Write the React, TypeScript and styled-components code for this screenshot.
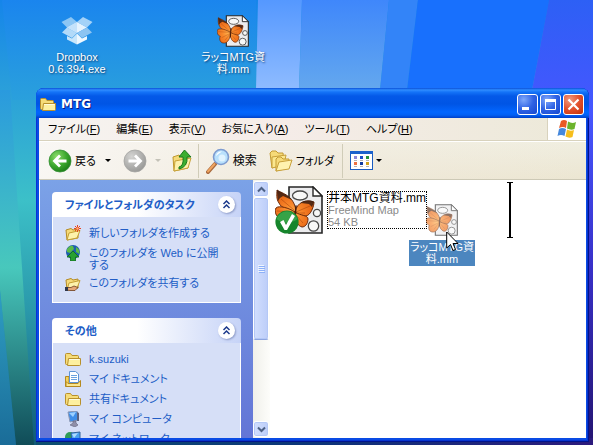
import React from "react";
import styled, { createGlobalStyle, css } from "styled-components";

const GlobalStyle = createGlobalStyle`
  *, *::before, *::after { box-sizing: border-box; }
  body {
    margin: 0;
    font-family: "Liberation Sans", "Noto Sans CJK JP", sans-serif;
    font-size: 11px;
    line-height: 12px;
    font-feature-settings: "palt";
  }
  button { font: inherit; color: inherit; padding: 0; border: 0; background: none; font-feature-settings: inherit; }
  svg { display: block; flex: none; }
`;

const Desktop = styled.main`
  position: relative;
  isolation: isolate;
  height: 100vh;
  display: flex;
  flex-direction: column;
  overflow: hidden;
`;

const WallpaperSvg = styled.svg`
  position: absolute;
  inset: 0;
  width: 100%;
  height: 100%;
  z-index: -1;
`;

const Shortcuts = styled.div`
  display: flex;
  gap: 80px;
  height: 88px;
  padding: 15px 0 0 39px;
`;

const Shortcut = styled.button`
  width: 76px;
  display: flex;
  flex-direction: column;
  align-items: center;
  gap: 4px;
  color: #fff;
  text-shadow: 1px 1px 2px #0a3a70;
`;

const Window = styled.section`
  flex: 1;
  min-height: 0;
  margin: 0 4px 3px 36px;
  padding: 0 3px 4px;
  display: flex;
  flex-direction: column;
  border-radius: 8px 8px 0 0;
  background: #0a4be4;
  box-shadow: inset -1px -1px 0 #00138c, inset 1px 0 0 #0831d9, inset -2px -2px 0 #0734d0;
  overflow: hidden;
`;

const TitleBar = styled.header`
  height: 30px;
  flex: none;
  margin: 0 -3px;
  padding: 2px 5px 0 4px;
  display: flex;
  align-items: center;
  gap: 5px;
  background: linear-gradient(#0a50d8 0, #2f8dff 2px, #1474f8 4px, #0459e8 8px, #0055e5 16px, #0266ff 24px, #0260f4 27px, #0140c8 30px);
`;

const Title = styled.h1`
  flex: 1;
  margin: 0;
  color: #fff;
  font: bold 12px/14px "DejaVu Sans", sans-serif;
  text-shadow: 1px 1px 0 #0a1883;
`;

const Captions = styled.div`
  display: flex;
  gap: 2px;
`;

const CaptionButton = styled.button<{ $close?: boolean }>`
  width: 21px;
  height: 21px;
  border: 1px solid #fff;
  border-radius: 3px;
  display: grid;
  place-items: center;
  background: ${(p) =>
    p.$close
      ? "radial-gradient(circle at 30% 25%, #f09a80, #e2502c 50%, #c03008)"
      : "radial-gradient(circle at 30% 25%, #7fa8fb, #2f62e4 50%, #1547cf)"};
`;

const MenuRow = styled.nav`
  flex: none;
  height: 23px;
  display: flex;
  align-items: stretch;
  background: linear-gradient(90deg, #f6f3f0, #f5ece8 45%, #ece9d8);
  border-bottom: 1px solid #d8d2bd;
`;

const Menus = styled.div`
  flex: 1;
  display: flex;
  align-items: center;
  gap: 16px;
  padding-left: 9px;
`;

const MenuButton = styled.button`
  white-space: nowrap;
  color: #000;
`;

const FlagBox = styled.div`
  width: 39px;
  display: grid;
  place-items: center;
  background: #fff;
  border-left: 1px solid #d8d2bd;
`;

const ToolBar = styled.div`
  flex: none;
  height: 39px;
  display: flex;
  align-items: center;
  padding-left: 9px;
  border-top: 1px solid #fff;
  border-bottom: 1px solid #cdc9b6;
  background: linear-gradient(90deg, rgba(250, 248, 246, 0.9), rgba(245, 238, 230, 0.5) 45%, rgba(236, 231, 212, 0)),
    linear-gradient(#f0eee0, #ece6d2);
`;

const ToolButton = styled.button<{ $space: number }>`
  display: flex;
  align-items: center;
  gap: 3px;
  margin-right: ${(p) => p.$space}px;
  white-space: nowrap;
`;

const ToolText = styled.span<{ $wide?: boolean }>`
  font-size: ${(p) => (p.$wide ? 12 : 11)}px;
`;

const Separator = styled.div`
  align-self: stretch;
  width: 1px;
  margin: 2px 7px 1px 0;
  background: #d0ccb8;
`;

const Caret = styled.span<{ $dim?: boolean }>`
  border: 3px solid transparent;
  border-bottom-width: 0;
  border-top-color: ${(p) => (p.$dim ? "#c4c2b8" : "#000")};
`;

const Content = styled.div`
  flex: 1;
  min-height: 0;
  display: flex;
  background: #fff;
  padding-left: 1px;
`;

const Sidebar = styled.aside`
  width: 213px;
  flex: none;
  overflow: hidden;
  padding: 12px 12px 0;
  background: linear-gradient(#7ba2e7, #6375d6);
`;

const Panel = styled.section`
  margin-bottom: 15px;
`;

const PanelHead = styled.div`
  height: 25px;
  display: flex;
  align-items: center;
  justify-content: space-between;
  padding: 0 6px 0 13px;
  border-radius: 4px 4px 0 0;
  background: linear-gradient(90deg, #fff 45%, #c6d3f7);
`;

const PanelTitle = styled.h2`
  margin: 0;
  font-size: 11px;
  line-height: 14px;
  font-weight: bold;
  color: #215dc6;
`;

const CollapseButton = styled.button`
  width: 17px;
  height: 17px;
  border-radius: 50%;
  background: #fff;
  box-shadow: 1px 1px 2px #8e9cc8;
  display: grid;
  place-items: center;
`;

const LinkList = styled.ul`
  list-style: none;
  margin: 0;
  padding: 8px 12px 11px;
  display: flex;
  flex-direction: column;
  gap: 4px;
  background: #d6dff7;
  border: 1px solid #fff;
  border-top: 0;
`;

const TaskLink = styled.a`
  display: flex;
  gap: 8px;
  color: #215dc6;
  text-decoration: none;
  white-space: nowrap;
`;

const TaskText = styled.span`
  padding-top: 2px;
`;

const ScrollBar = styled.div`
  width: 17px;
  flex: none;
  display: flex;
  flex-direction: column;
  padding: 1px 1px 1px 0;
  background: linear-gradient(90deg, #f0f0ea, #fdfdfa);
`;

const scrollPart = css`
  border: 1px solid #fff;
  border-radius: 3px;
  background: linear-gradient(90deg, #d2dffe, #bccdf8);
  box-shadow: inset 0 0 0 1px #b4c8f6;
  display: grid;
  place-items: center;
`;

const ScrollButton = styled.button`
  ${scrollPart}
  height: 16px;
  flex: none;
`;

const ScrollTrack = styled.div`
  flex: 1;
  min-height: 0;
`;

const ScrollThumb = styled.div`
  ${scrollPart}
  height: 64%;
  border-bottom-color: #8ea6e0;
`;

const Files = styled.div`
  position: relative;
  flex: 1;
  padding: 6px 5px;
`;

const FileItem = styled.button`
  display: flex;
  align-items: center;
  gap: 4px;
  text-align: left;
`;

const FileLabel = styled.span`
  border: 1px dotted #000;
  white-space: nowrap;
  display: flex;
  flex-direction: column;
  color: #8a8a8a;
`;

const FileName = styled.span`
  color: #000;
  font-size: 12px;
`;

const DragGhost = styled.div`
  position: absolute;
  left: 139px;
  top: 24px;
  width: 66px;
  display: flex;
  flex-direction: column;
  align-items: center;
  gap: 4px;
`;

const GhostIcon = styled.div`
  opacity: 0.65;
`;

const GhostLabel = styled.span`
  align-self: stretch;
  padding: 1px 0;
  text-align: center;
  white-space: nowrap;
  color: #fff;
  background: #4c86bf;
`;

const Pointer = styled.svg`
  position: absolute;
  left: 37px;
  top: 27px;
`;

const InsertMark = styled.svg`
  position: absolute;
  left: 237px;
  top: 2px;
`;

function Wallpaper() {
  return (
    <WallpaperSvg viewBox="0 0 593 445" preserveAspectRatio="none" aria-hidden="true">
      <defs>
        <linearGradient id="wpBase" x1="0" y1="0" x2="0" y2="1">
          <stop offset="0" stopColor="#1585ea" />
          <stop offset="0.2" stopColor="#2a9fda" />
          <stop offset="0.45" stopColor="#3cc0c8" />
          <stop offset="0.7" stopColor="#2a98aa" />
          <stop offset="1" stopColor="#115a78" />
        </linearGradient>
        <linearGradient id="wpSky" x1="0" y1="0" x2="0" y2="1">
          <stop offset="0" stopColor="#1a85ee" />
          <stop offset="1" stopColor="#2aa0dc" />
        </linearGradient>
        <linearGradient id="wpBand" x1="0" y1="0" x2="0" y2="1">
          <stop offset="0" stopColor="#5598ff" />
          <stop offset="1" stopColor="#8fbcff" />
        </linearGradient>
        <linearGradient id="wpMid" x1="0" y1="0" x2="0" y2="1">
          <stop offset="0" stopColor="#3f87fb" />
          <stop offset="1" stopColor="#64a8ee" />
        </linearGradient>
        <linearGradient id="wpEdge" x1="0" y1="0" x2="0" y2="1">
          <stop offset="0" stopColor="#2d60f5" />
          <stop offset="0.25" stopColor="#4656ff" />
          <stop offset="0.6" stopColor="#3830c8" />
          <stop offset="1" stopColor="#241470" />
        </linearGradient>
        <linearGradient id="wpStreak" x1="0" y1="0" x2="0" y2="1">
          <stop offset="0" stopColor="#2a9ade" />
          <stop offset="0.5" stopColor="#48c8bc" />
          <stop offset="1" stopColor="#104c58" />
        </linearGradient>
        <linearGradient id="wpCorner" x1="0" y1="0" x2="0" y2="1">
          <stop offset="0" stopColor="#2f9fc4" />
          <stop offset="1" stopColor="#1a6c98" />
        </linearGradient>
        <linearGradient id="wpFoot">
          <stop offset="0" stopColor="#0d5070" />
          <stop offset="0.5" stopColor="#0c3478" />
          <stop offset="1" stopColor="#2c1a7c" />
        </linearGradient>
      </defs>
      <rect width="593" height="445" fill="url(#wpBase)" />
      <path d="M2 0H256V100H12Z" fill="url(#wpSky)" />
      <path d="M0 90H10L34 445H16L0 290Z" fill="url(#wpStreak)" />
      <path d="M0 290L16 445H0Z" fill="url(#wpCorner)" />
      <path d="M258 0H302L299 90H256Z" fill="url(#wpBand)" />
      <path d="M302 0H389L380 90H299Z" fill="url(#wpMid)" />
      <path d="M389 0H418L407 90H380Z" fill="#3384f8" />
      <path d="M418 0H549L532 90H407Z" fill="#1870fd" />
      <path d="M549 0H593V445H480L532 90Z" fill="url(#wpEdge)" />
      <rect x="36" y="438" width="557" height="7" fill="url(#wpFoot)" />
    </WallpaperSvg>
  );
}

function DropboxIcon() {
  return (
    <svg width="32" height="32" viewBox="0 0 32 32" aria-hidden="true">
      <path d="M0.500 7L10 2L16 7L6 12.500Z" fill="#8cc6f4" />
      <path d="M31.500 7L22 2L16 7L26 12.500Z" fill="#a4d2f8" />
      <path d="M6 12.500L16 7L26 12.500L16 18Z" fill="#e6f3fe" />
      <path d="M6 12.500L16 7V18Z" fill="#c4e2fb" />
      <path d="M1 17.500L6 12.500L16 18L11 23Z" fill="#b2daf9" />
      <path d="M31 17.500L26 12.500L16 18L21 23Z" fill="#8cc4f2" />
      <path d="M6 21L11 23.500L16 18.500V29.500L6 24.500Z" fill="#c8e6fb" />
      <path d="M26 21L21 23.500L16 18.500V29.500L26 24.500Z" fill="#eef8ff" />
    </svg>
  );
}

function ButterflyIcon({ size, checked }: { size: number; checked?: boolean }) {
  return (
    <svg width={size} height={size} viewBox="0 0 48 48" aria-hidden="true">
      <defs>
        <radialGradient id={`wing${size}`} gradientUnits="userSpaceOnUse" cx="17" cy="27" r="30">
          <stop offset="0" stopColor="#ffb04c" />
          <stop offset="0.3" stopColor="#f8862a" />
          <stop offset="0.7" stopColor="#e66414" />
          <stop offset="1" stopColor="#6a2408" />
        </radialGradient>
      </defs>
      <path d="M14 1H38L47 10V47H14Z" fill="#ececee" stroke="#262626" strokeWidth="1.6" />
      <path d="M38 1V10H47Z" fill="#fff" stroke="#262626" strokeWidth="1.4" />
      <g fill="#f8f8f8" stroke="#484848" strokeWidth="1.3">
        <ellipse cx="25" cy="9.500" rx="7.500" ry="4.500" />
        <circle cx="42" cy="27" r="3.600" />
        <circle cx="38.500" cy="40" r="5.200" />
      </g>
      <g fill={`url(#wing${size})`} stroke="#6a2808" strokeWidth="1">
        <path d="M20 26C13 24 6 22 4 17C1 13 2 8 2 4C8 8 18 9 21 24Z" />
        <path d="M20 26C22 16 31 13 39 16C39 20 36 29 31 30C27 31 23 29 20 26Z" />
        <path d="M20 26C14 22 4 19 1 22C-1 25 1 31 5 32C3 35 4 41 9 42C15 43 19 37 20 30Z" />
        <path d="M20 26C26 30 33 29 33 33C33 38 30 41 27 41C23 40 20 35 20 30Z" />
      </g>
      <path d="M2 4C8 8 14 9 17 14L8 10L5 12L3 15ZM39 16C35 14 30 14 26 17L34 18L37 21Z" fill="#3c2014" opacity="0.85" />
      <path d="M6 13L19 24M2 25L19 26M7 34L19 28M35 20L21 26M30 27L21 27M28 37L21 29M12 38L19 29" stroke="#a03c08" strokeWidth="0.500" fill="none" />
      <path d="M21 20L20 33" stroke="#4a1c08" strokeWidth="1.500" strokeLinecap="round" />
      {checked && (
        <g>
          <circle cx="12" cy="36" r="11.6" fill="#16852c" />
          <path d="M1.5 33A11 11 0 0 1 22.500 33C16 38 8 38 1.500 33Z" fill="#42ae50" opacity="0.75" />
          <path d="M5 36L8.500 34L11 39L17 28L20 30L12 44H9.500Z" fill="#fff" />
        </g>
      )}
    </svg>
  );
}

function FolderIcon() {
  return (
    <svg width="16" height="16" viewBox="0 0 16 16" aria-hidden="true">
      <path d="M0.500 3.500Q0.500 2.500 1.500 2.500H5.500L7 4.500H12.500Q13.500 4.500 13.500 5.500V13.500H1.500Q0.500 13.500 0.500 12.500Z" fill="#f6dc78" stroke="#b8902c" />
      <path d="M3.500 7.500H15.500V13.500Q15.500 14.500 14.500 14.500H2.500Z" fill="#fdf0a0" stroke="#b8902c" />
      <path d="M4 8.500H14.500" stroke="#fffbdc" />
    </svg>
  );
}

function OpenFolder() {
  return (
    <>
      <path d="M1 5L6 3.500L8 5L13 4V13L2 15Z" fill="#f6da78" stroke="#b48a24" />
      <path d="M4 8L15 5.500L12 13L2 15Z" fill="#fdf2ac" stroke="#c49e34" />
    </>
  );
}

type TaskKind = "new" | "web" | "share" | "folder" | "docs" | "computer" | "network";

function TaskIcon({ kind }: { kind: TaskKind }) {
  if (kind === "folder") return <FolderIcon />;
  return (
    <svg width="16" height="16" viewBox="0 0 16 16" aria-hidden="true">
      {kind === "new" && (
        <>
          <OpenFolder />
          <path d="M12.500 0V7M9 3.500H16M10 1L15 6M15 1L10 6" stroke="#e84420" strokeWidth="1" />
          <circle cx="12.500" cy="3.500" r="1.200" fill="#ffb070" />
        </>
      )}
      {kind === "web" && (
        <>
          <circle cx="8" cy="7" r="7" fill="#1d5fae" />
          <path d="M2 4Q5 0 8 1L9 4L5 8L2 7ZM11 2Q15 4 14.500 9L11 7Z" fill="#5cba48" />
          <path d="M8 6L14 12H10.500V16H5.500V12H2Z" fill="#27a032" stroke="#0d6a1c" strokeWidth="0.8" />
        </>
      )}
      {kind === "share" && (
        <>
          <OpenFolder />
          <path d="M1 12.500H6L9 11L13 12.500L10 15.500H5L1 15Z" fill="#e6a878" stroke="#6c3c1c" strokeWidth="0.800" />
          <path d="M0 12H3V16H0Z" fill="#30384c" />
        </>
      )}
      {kind === "docs" && (
        <>
          <path d="M0.500 5.500H4V13H15V15.500H0.500Z" fill="#f2cf5c" stroke="#b48920" />
          <path d="M4.500 0.500H10.500L13.500 3V11.500H4.500Z" fill="#fff" stroke="#5e94d4" />
          <path d="M6 4.500H12M6 6.500H12M6 8.500H12" stroke="#6ca2e0" />
          <path d="M1 10.500L3 12.500H13L15.500 9.500V15.500H1Z" fill="#fbe68c" stroke="#b48920" />
        </>
      )}
      {kind === "computer" && (
        <>
          <path d="M3 1L12 0L13 9L5 11Z" fill="#3f8ee8" stroke="#8c98b4" />
          <path d="M4 2L11 1L8 6Z" fill="#9cd0ff" />
          <path d="M12 1L14 2V10L12 10Z" fill="#5a6280" />
          <path d="M8 10H11V12L13 14L10 16L5 14L8 12Z" fill="#8f8fa8" stroke="#63637c" strokeWidth="0.600" />
        </>
      )}
      {kind === "network" && (
        <>
          <circle cx="5" cy="6" r="5" fill="#2f9c58" />
          <path d="M6 2L15 1V10L7 11Z" fill="#4ba2ee" stroke="#34649c" />
          <path d="M7 3L13 2L9 7Z" fill="#b0dcff" />
          <path d="M4 13H14" stroke="#666c80" strokeWidth="2" />
        </>
      )}
    </svg>
  );
}

function RoundArrow({ dim }: { dim?: boolean }) {
  const id = dim ? "arrowDim" : "arrowGreen";
  return (
    <svg width="24" height="24" viewBox="0 0 24 24" aria-hidden="true">
      <defs>
        <radialGradient id={id} cx="0.35" cy="0.3" r="0.75">
          <stop offset="0" stopColor={dim ? "#d4d4d2" : "#8cdc6c"} />
          <stop offset="0.6" stopColor={dim ? "#b0b0ae" : "#3aa62c"} />
          <stop offset="1" stopColor={dim ? "#989896" : "#1c7c18"} />
        </radialGradient>
      </defs>
      <circle cx="12" cy="12" r="11" fill={`url(#${id})`} stroke={dim ? "#a4a4a2" : "#38903a"} strokeWidth="0.800" />
      <path
        d={dim ? "M5.500 12H17M12 6.500L17.500 12L12 17.500" : "M18.500 12H7M12 6.500L6.500 12L12 17.500"}
        stroke="#fff"
        strokeWidth="2.800"
        fill="none"
      />
    </svg>
  );
}

function UpIcon() {
  return (
    <svg width="22" height="24" viewBox="0 0 22 24" aria-hidden="true">
      <path d="M2 8L8 6L10 8L17 6V19L3 22Z" fill="#f6da78" stroke="#bf982e" />
      <path d="M4 12L20 9L17 19L3 22Z" fill="#fdf1ac" stroke="#c8a238" />
      <path d="M8 18Q13 17 12 8H8L13.500 1L20 8H16Q17 18 8 20Z" fill="#3cae30" stroke="#1b7a1c" />
    </svg>
  );
}

function SearchIcon() {
  return (
    <svg width="24" height="26" viewBox="0 0 24 26" aria-hidden="true">
      <path d="M9 16L2 24" stroke="#a8683c" strokeWidth="4" strokeLinecap="round" />
      <path d="M8.500 16L2 23.500" stroke="#f0a460" strokeWidth="2" strokeLinecap="round" />
      <circle cx="15" cy="9" r="7.500" fill="#b8e0fc" stroke="#7e9cd0" strokeWidth="1.600" />
      <path d="M10 8Q11 3 16 3.500Q13 5 10 8Z" fill="#fff" />
      <circle cx="16" cy="10" r="3.500" fill="#e0f3ff" />
    </svg>
  );
}

function FoldersIcon() {
  return (
    <svg width="24" height="24" viewBox="0 0 24 24" aria-hidden="true">
      <path d="M1 4L3 2H7L9 4H14L15 15L3 19Z" fill="#f6da78" stroke="#c29a34" />
      <path d="M3 8L17 6L15 16L3 19Z" fill="#fbe78e" stroke="#c8a03a" />
      <path d="M7 10L9 8H12L14 10H20L20 19L7 22Z" fill="#f6da78" stroke="#c29a34" />
      <path d="M10 13L23 11L20 20L7 22Z" fill="#fff2ae" stroke="#c8a03a" />
    </svg>
  );
}

function ViewsIcon() {
  const colors = ["#8c86d8", "#1c50c8", "#259638", "#ec7040", "#103ca0", "#d0a018"];
  return (
    <svg width="23" height="19" viewBox="0 0 23 19" aria-hidden="true">
      <rect x="0.500" y="0.500" width="22" height="18" fill="#fff" stroke="#1a5cc0" />
      <rect x="0" y="0" width="23" height="3" fill="#1c62cc" />
      {colors.map((c, i) => (
        <g key={c}>
          <rect x={4 + (i % 3) * 6} y={i < 3 ? 5 : 11} width="3" height="3" fill={c} />
          <rect x={4 + (i % 3) * 6} y={i < 3 ? 9 : 15} width="3" height="1" fill="#b4b4b4" />
        </g>
      ))}
    </svg>
  );
}

function FlagIcon() {
  return (
    <svg width="20" height="20" viewBox="0 0 20 20" aria-hidden="true">
      <path d="M4 2Q7 0 10 2L9 9Q6 7 2 9Z" fill="#ea5a24" />
      <path d="M11 2.500Q15 5 19 3L17.500 10Q14 11.500 10 9.500Z" fill="#6cb42c" />
      <path d="M2 10Q5 8 9 10L7.500 17Q4 15 0.500 17Z" fill="#4688dc" />
      <path d="M10 10.500Q13 12.500 17 11L15.500 18Q12 19.500 8.500 17.500Z" fill="#f6be1c" />
    </svg>
  );
}

function Chevron({ down }: { down?: boolean }) {
  return (
    <svg width="9" height="7" viewBox="0 0 9 7" aria-hidden="true">
      <path d={down ? "M1 1.500L4.500 5L8 1.500" : "M1 5.500L4.500 2L8 5.500"} fill="none" stroke="#4d6185" strokeWidth="2" />
    </svg>
  );
}

function TaskPanel({ title, items }: { title: string; items: [TaskKind, React.ReactNode][] }) {
  return (
    <Panel>
      <PanelHead>
        <PanelTitle>{title}</PanelTitle>
        <CollapseButton aria-label={title}>
          <svg width="9" height="9" viewBox="0 0 9 9" aria-hidden="true">
            <path d="M1.500 4L4.500 1L7.500 4M1.500 8L4.500 5L7.500 8" fill="none" stroke="#1c3a8c" strokeWidth="1.500" />
          </svg>
        </CollapseButton>
      </PanelHead>
      <LinkList>
        {items.map(([kind, label]) => (
          <li key={kind + String(label)}>
            <TaskLink href="#">
              <TaskIcon kind={kind} />
              <TaskText>{label}</TaskText>
            </TaskLink>
          </li>
        ))}
      </LinkList>
    </Panel>
  );
}

const menus: [string, string][] = [
  ["ファイル", "F"],
  ["編集", "E"],
  ["表示", "V"],
  ["お気に入り", "A"],
  ["ツール", "T"],
  ["ヘルプ", "H"],
];

const folderTasks: [TaskKind, React.ReactNode][] = [
  ["new", "新しいフォルダを作成する"],
  ["web", <>このフォルダを Web に公開<br />する</>],
  ["share", "このフォルダを共有する"],
];

const places: [TaskKind, React.ReactNode][] = [
  ["folder", "k.suzuki"],
  ["docs", "マイ ドキュメント"],
  ["folder", "共有ドキュメント"],
  ["computer", "マイ コンピュータ"],
  ["network", "マイ ネットワーク"],
];

export default function App() {
  return (
    <Desktop>
      <GlobalStyle />
      <Wallpaper />
      <Shortcuts>
        <Shortcut>
          <DropboxIcon />
          <span>Dropbox<br />0.6.394.exe</span>
        </Shortcut>
        <Shortcut>
          <ButterflyIcon size={32} />
          <span>ラッコMTG資<br />料.mm</span>
        </Shortcut>
      </Shortcuts>
      <Window>
        <TitleBar>
          <FolderIcon />
          <Title>MTG</Title>
          <Captions>
            <CaptionButton aria-label="最小化">
              <svg width="13" height="13" viewBox="0 0 13 13"><path d="M1 9H8V12H1Z" fill="#fff" /></svg>
            </CaptionButton>
            <CaptionButton aria-label="最大化">
              <svg width="13" height="13" viewBox="0 0 13 13"><path d="M1.500 2V11.500H11.500V2Z" fill="none" stroke="#fff" /><path d="M1 1H12V4H1Z" fill="#fff" /></svg>
            </CaptionButton>
            <CaptionButton $close aria-label="閉じる">
              <svg width="13" height="13" viewBox="0 0 13 13"><path d="M1.500 1.500L11.500 11.500M11.500 1.500L1.500 11.500" stroke="#fff" strokeWidth="2.200" /></svg>
            </CaptionButton>
          </Captions>
        </TitleBar>
        <MenuRow>
          <Menus>
            {menus.map(([label, key]) => (
              <MenuButton key={key}>{label}(<u>{key}</u>)</MenuButton>
            ))}
          </Menus>
          <FlagBox><FlagIcon /></FlagBox>
        </MenuRow>
        <ToolBar>
          <ToolButton $space={9}><RoundArrow /><ToolText>戻る</ToolText></ToolButton>
          <ToolButton $space={12} aria-label="戻る履歴"><Caret /></ToolButton>
          <ToolButton $space={8} aria-label="進む"><RoundArrow dim /></ToolButton>
          <ToolButton $space={10} aria-label="進む履歴"><Caret $dim /></ToolButton>
          <ToolButton $space={5} aria-label="上へ"><UpIcon /></ToolButton>
          <Separator />
          <ToolButton $space={12}><SearchIcon /><ToolText $wide>検索</ToolText></ToolButton>
          <ToolButton $space={8}><FoldersIcon /><ToolText>フォルダ</ToolText></ToolButton>
          <Separator />
          <ToolButton $space={0} aria-label="表示"><ViewsIcon /><Caret /></ToolButton>
        </ToolBar>
        <Content>
          <Sidebar>
            <TaskPanel title="ファイルとフォルダのタスク" items={folderTasks} />
            <TaskPanel title="その他" items={places} />
          </Sidebar>
          <ScrollBar>
            <ScrollButton aria-label="上にスクロール"><Chevron /></ScrollButton>
            <ScrollTrack>
              <ScrollThumb>
                <svg width="7" height="8" viewBox="0 0 7 8" aria-hidden="true">
                  <path d="M0 0.500H6M0 2.500H6M0 4.500H6M0 6.500H6" stroke="#eef4fe" />
                  <path d="M1 1.500H7M1 3.500H7M1 5.500H7M1 7.500H7" stroke="#8cb0f8" />
                </svg>
              </ScrollThumb>
            </ScrollTrack>
            <ScrollButton aria-label="下にスクロール"><Chevron down /></ScrollButton>
          </ScrollBar>
          <Files>
            <FileItem>
              <ButterflyIcon size={48} checked />
              <FileLabel>
                <FileName>井本MTG資料.mm</FileName>
                <span>FreeMind Map</span>
                <span>54 KB</span>
              </FileLabel>
            </FileItem>
            <DragGhost>
              <GhostIcon><ButterflyIcon size={32} /></GhostIcon>
              <GhostLabel>ラッコMTG資<br />料.mm</GhostLabel>
              <Pointer width="13" height="21" viewBox="0 0 13 21" aria-hidden="true">
                <path d="M0.700 1V17L4.500 13.500L7 19.500L9.500 18.500L7 12.500H12Z" fill="#fff" stroke="#000" />
              </Pointer>
            </DragGhost>
            <InsertMark width="6" height="56" viewBox="0 0 6 56" aria-hidden="true">
              <path d="M0 0H6V1H4V55H6V56H0V55H2V1H0Z" fill="#000" />
            </InsertMark>
          </Files>
        </Content>
      </Window>
    </Desktop>
  );
}
